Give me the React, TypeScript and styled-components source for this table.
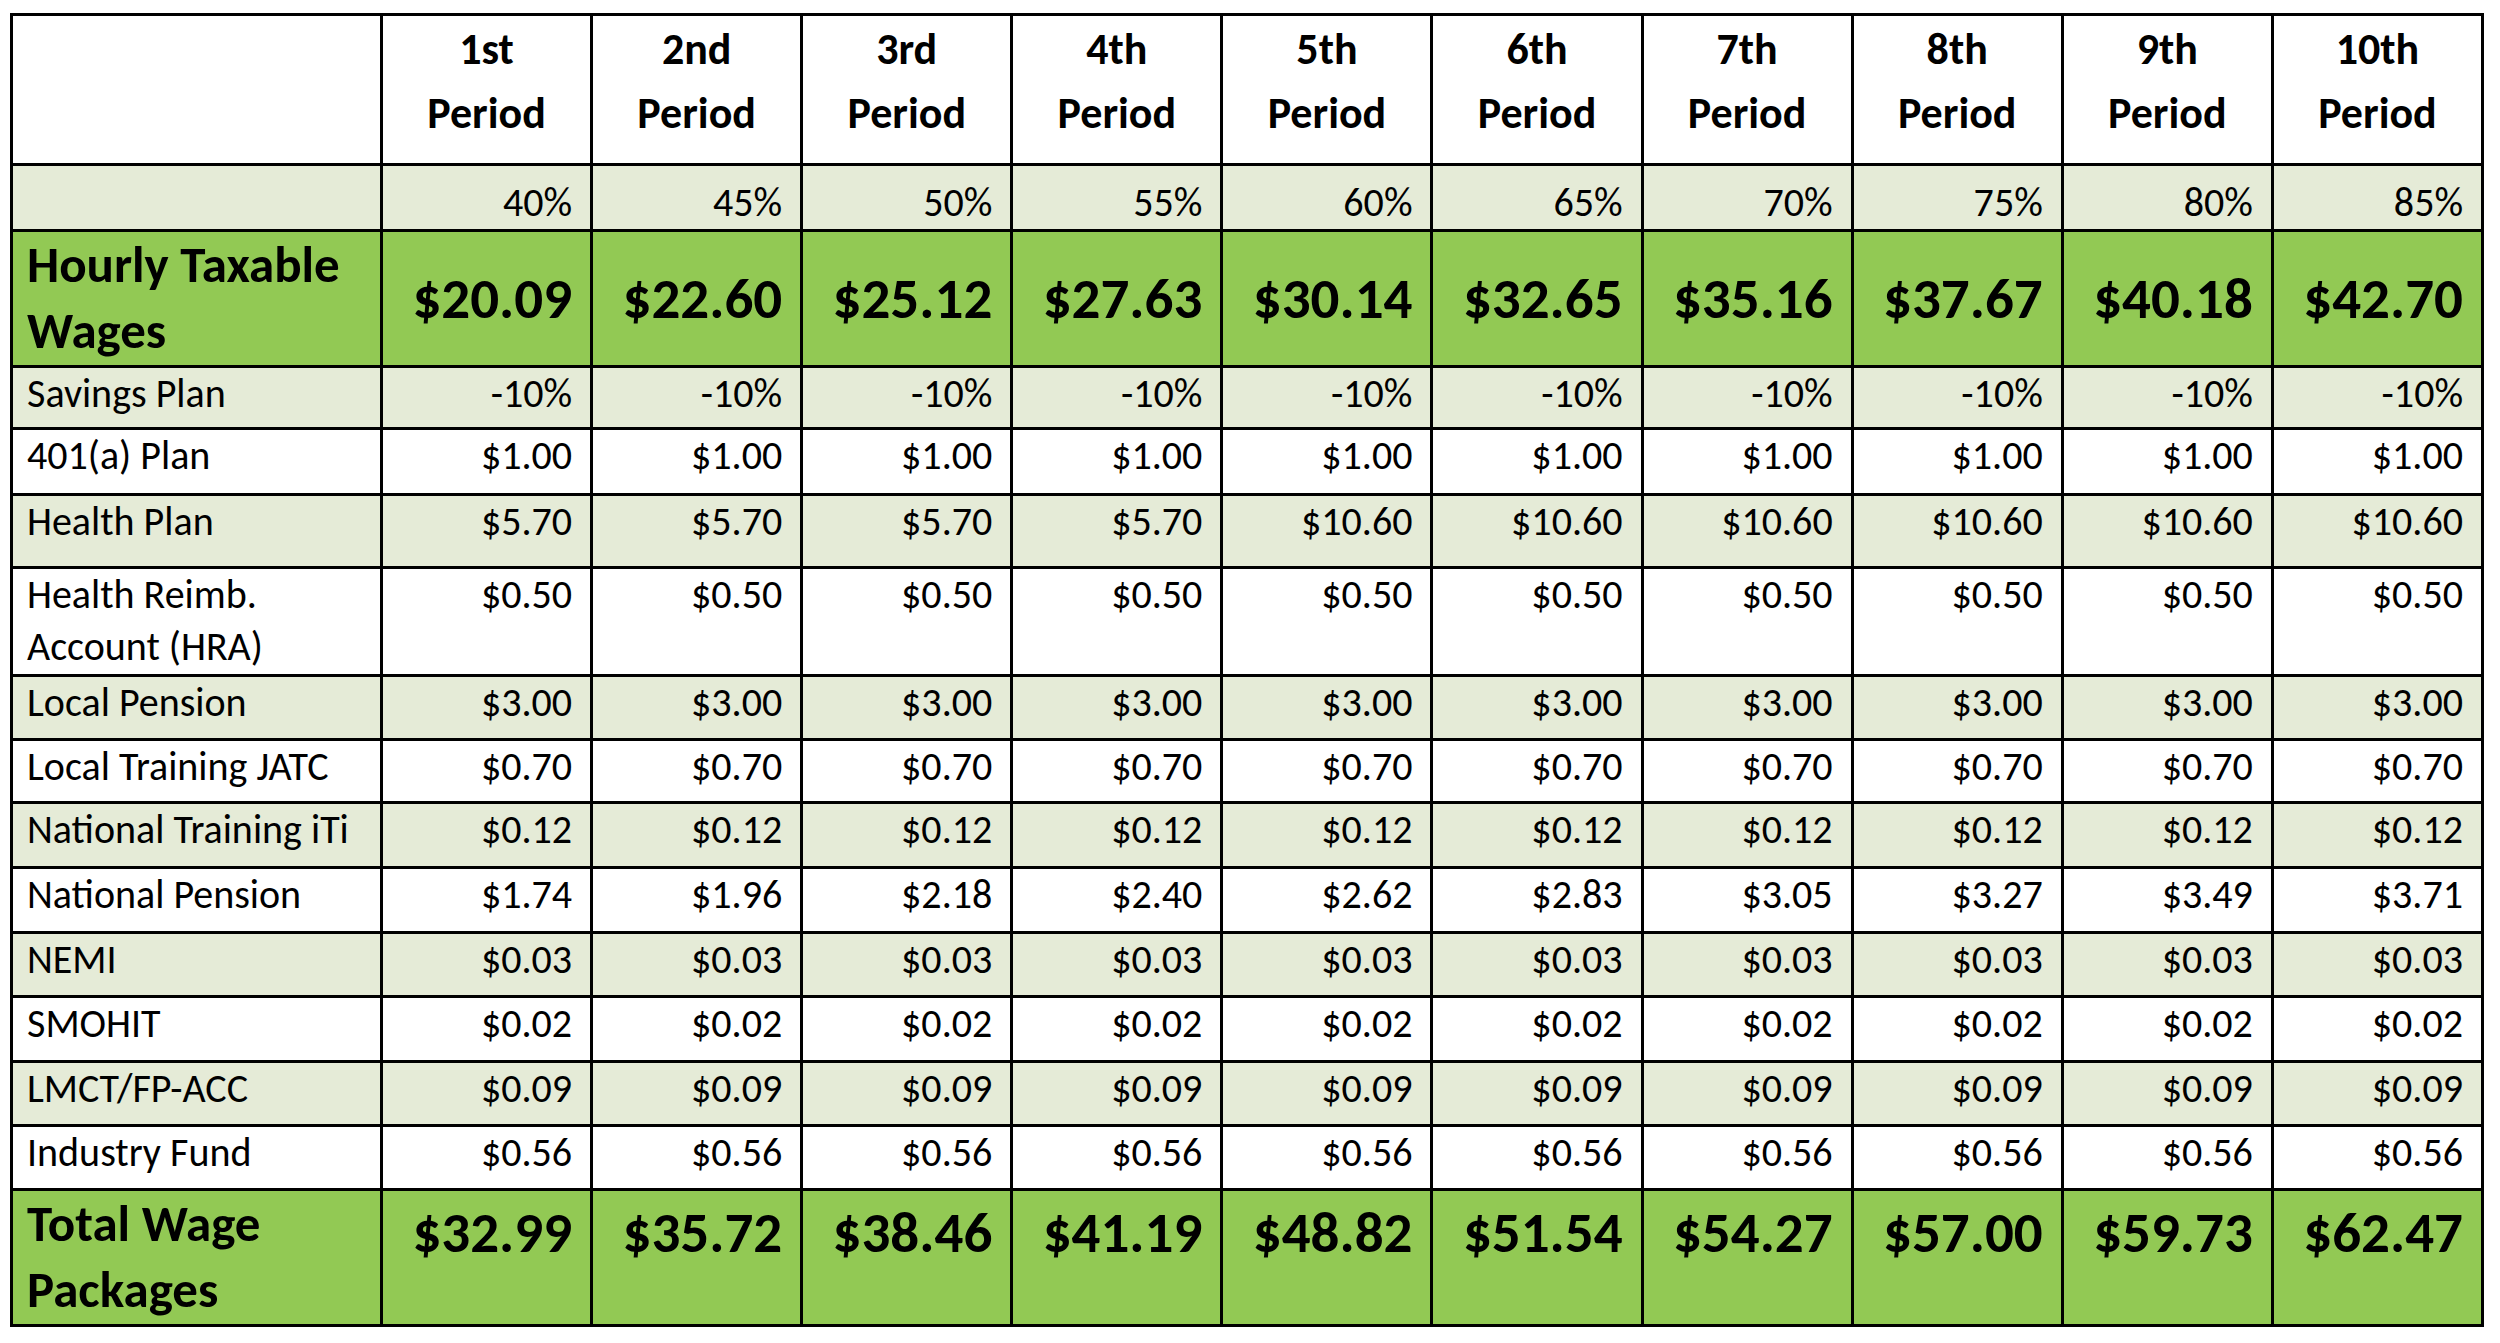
import React from "react";
import styled, { createGlobalStyle, css } from "styled-components";

const Global = createGlobalStyle`
  html, body { margin: 0; padding: 0; background: #ffffff; }
  body { font-family: Carlito, Calibri, Lato, "Liberation Sans", sans-serif; color: #000; }
`;

type Tone = "white" | "light" | "green";

const toneColor: Record<Tone, string> = {
  white: "#ffffff",
  light: "#e5ebd7",
  green: "#92c954",
};

const Page = styled.div`
  padding: 13px 0 0 10px;
`;

const Table = styled.table`
  border-collapse: collapse;
  table-layout: fixed;
  width: 2474px;
  border: 3px solid #000;
`;

const Row = styled.tr<{ $tone: Tone; $h: number }>`
  background: ${(p) => toneColor[p.$tone]};
  height: ${(p) => p.$h}px;
`;

const cellBase = css`
  border: 3px solid #000;
  padding: 0 18px 0 14px;
  vertical-align: top;
  white-space: normal;
`;

const HeadCell = styled.th`
  ${cellBase};
  padding: 1px 4px 0;
  font-size: 44px;
  font-weight: 700;
  line-height: 64px;
  text-align: center;
`;

type Kind = "normal" | "pct" | "big";

const LabelCell = styled.td<{ $kind: Kind }>`
  ${cellBase};
  text-align: left;
  ${(p) =>
    p.$kind === "big"
      ? css`
          font-size: 51px;
          font-weight: 700;
          line-height: 66px;
        `
      : css`
          font-size: 40px;
          line-height: 52px;
        `}
`;

const ValueCell = styled.td<{ $kind: Kind; $middle?: boolean }>`
  ${cellBase};
  text-align: right;
  ${(p) =>
    p.$kind === "big"
      ? css`
          font-size: 57px;
          font-weight: 700;
          line-height: 68px;
          padding-top: ${p.$middle ? 0 : 8}px;
          vertical-align: ${p.$middle ? "middle" : "top"};
        `
      : p.$kind === "pct"
      ? css`
          font-size: 40px;
          line-height: 52px;
          vertical-align: bottom;
        `
      : css`
          font-size: 40px;
          line-height: 52px;
        `}
`;

const periods = ["1st", "2nd", "3rd", "4th", "5th", "6th", "7th", "8th", "9th", "10th"];

const money = (arr: number[]) => arr.map((n) => `$${n.toFixed(2)}`);
const same = (v: string, n = 10) => Array(n).fill(v) as string[];

type RowDef = {
  label: string;
  tone: Tone;
  h: number;
  kind: Kind;
  values: string[];
  middle?: boolean;
};

const rows: RowDef[] = [
  { label: "", tone: "light", h: 66, kind: "pct", values: [40, 45, 50, 55, 60, 65, 70, 75, 80, 85].map((n) => `${n}%`) },
  {
    label: "Hourly Taxable Wages",
    tone: "green",
    h: 136,
    kind: "big",
    middle: true,
    values: money([20.09, 22.6, 25.12, 27.63, 30.14, 32.65, 35.16, 37.67, 40.18, 42.7]),
  },
  { label: "Savings Plan", tone: "light", h: 62, kind: "normal", values: same("-10%") },
  { label: "401(a) Plan", tone: "white", h: 66, kind: "normal", values: same("$1.00") },
  {
    label: "Health Plan",
    tone: "light",
    h: 73,
    kind: "normal",
    values: [...same("$5.70", 4), ...same("$10.60", 6)],
  },
  { label: "Health Reimb. Account (HRA)", tone: "white", h: 108, kind: "normal", values: same("$0.50") },
  { label: "Local Pension", tone: "light", h: 64, kind: "normal", values: same("$3.00") },
  { label: "Local Training JATC", tone: "white", h: 63, kind: "normal", values: same("$0.70") },
  { label: "National Training iTi", tone: "light", h: 65, kind: "normal", values: same("$0.12") },
  {
    label: "National Pension",
    tone: "white",
    h: 65,
    kind: "normal",
    values: money([1.74, 1.96, 2.18, 2.4, 2.62, 2.83, 3.05, 3.27, 3.49, 3.71]),
  },
  { label: "NEMI", tone: "light", h: 64, kind: "normal", values: same("$0.03") },
  { label: "SMOHIT", tone: "white", h: 65, kind: "normal", values: same("$0.02") },
  { label: "LMCT/FP-ACC", tone: "light", h: 64, kind: "normal", values: same("$0.09") },
  { label: "Industry Fund", tone: "white", h: 64, kind: "normal", values: same("$0.56") },
  {
    label: "Total Wage Packages",
    tone: "green",
    h: 136,
    kind: "big",
    values: money([32.99, 35.72, 38.46, 41.19, 48.82, 51.54, 54.27, 57.0, 59.73, 62.47]),
  },
];

export default function App() {
  return (
    <Page>
      <Global />
      <Table>
        <colgroup>
          <col style={{ width: 370 }} />
          {periods.map((p) => (
            <col key={p} />
          ))}
        </colgroup>
        <thead>
          <Row $tone="white" $h={150}>
            <HeadCell />
            {periods.map((p) => (
              <HeadCell key={p}>
                {p}
                <br />
                Period
              </HeadCell>
            ))}
          </Row>
        </thead>
        <tbody>
          {rows.map((r, i) => (
            <Row key={i} $tone={r.tone} $h={r.h}>
              <LabelCell $kind={r.kind}>{r.label}</LabelCell>
              {r.values.map((v, j) => (
                <ValueCell key={j} $kind={r.kind} $middle={r.middle}>
                  {v}
                </ValueCell>
              ))}
            </Row>
          ))}
        </tbody>
      </Table>
    </Page>
  );
}
